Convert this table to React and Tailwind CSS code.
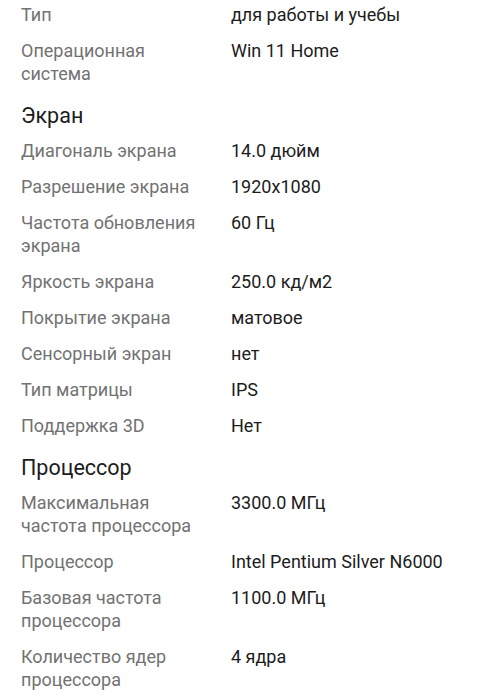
const sections = [
  {
    title: null,
    rows: [
      ["Тип", "для работы и учебы"],
      ["Операционная система", "Win 11 Home"],
    ],
  },
  {
    title: "Экран",
    rows: [
      ["Диагональ экрана", "14.0 дюйм"],
      ["Разрешение экрана", "1920x1080"],
      ["Частота обновления экрана", "60 Гц"],
      ["Яркость экрана", "250.0 кд/м2"],
      ["Покрытие экрана", "матовое"],
      ["Сенсорный экран", "нет"],
      ["Тип матрицы", "IPS"],
      ["Поддержка 3D", "Нет"],
    ],
  },
  {
    title: "Процессор",
    rows: [
      ["Максимальная частота процессора", "3300.0 МГц"],
      ["Процессор", "Intel Pentium Silver N6000"],
      ["Базовая частота процессора", "1100.0 МГц"],
      ["Количество ядер процессора", "4 ядра"],
    ],
  },
];

function SpecRow({ label, value }) {
  return (
    <div className="flex text-[18px] leading-[23px]">
      <div className="w-[210px] shrink-0 pr-4 text-[#727272]">{label}</div>
      <div className="flex-1 text-[#1c1c1c]">{value}</div>
    </div>
  );
}

export default function App() {
  return (
    <div
      className="min-h-[700px] bg-white pl-[21px] pr-4 pt-[3px]"
      style={{ fontFamily: "Roboto, 'Noto Sans', sans-serif" }}
    >
      {sections.map((section, i) => (
        <section key={i}>
          {section.title && (
            <h2 className="mt-[17.5px] mb-[10.5px] text-[21.5px] leading-[26px] text-[#1c1c1c]">
              {section.title}
            </h2>
          )}
          <div className="flex flex-col gap-[13px]">
            {section.rows.map(([label, value]) => (
              <SpecRow key={label} label={label} value={value} />
            ))}
          </div>
        </section>
      ))}
    </div>
  );
}
